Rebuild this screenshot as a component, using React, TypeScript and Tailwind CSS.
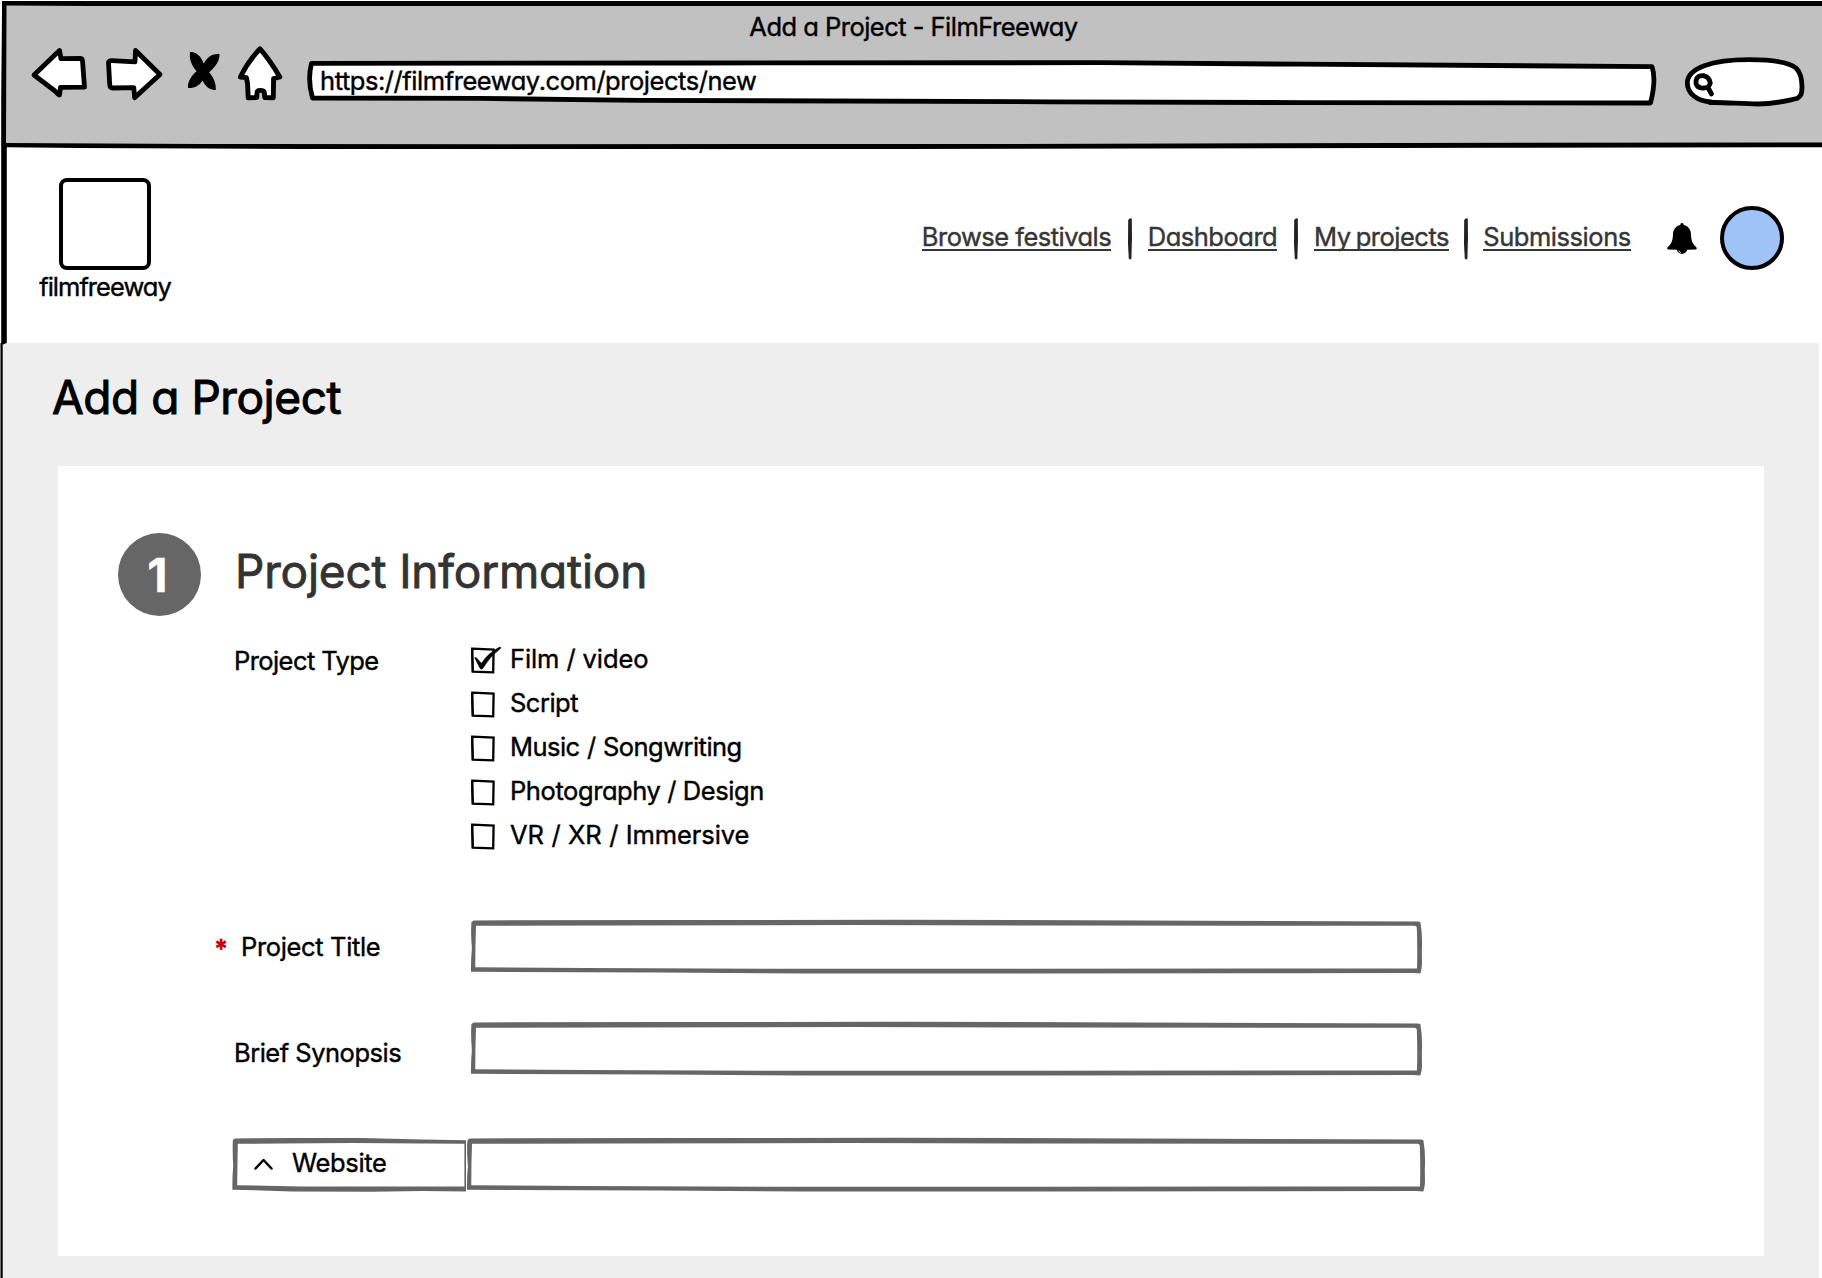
import type { ReactNode } from "react";

/* Hand-drawn rectangle outline that frames its children. */
function SketchBox({ w, children, className = "" }: { w: number; children?: ReactNode; className?: string }) {
  const outer = `M0.4 2.5 Q1 0.8 3 0.4 L${w * 0.2} 0 L${w * 0.45} -0.2 L${w * 0.7} 0.4 L${w - 3.5} 1.6 L${w - 1.6} 2.3 Q${w + 0.8} 16 ${w - 0.2} 31 L${w} 44 Q${w} 48 ${w - 1.6} 53.6 L${w - 9} 53 L${w * 0.6} 53.4 L${w * 0.35} 53.4 L${w * 0.2} 52.6 L0 51.7 Q-0.2 40 0.9 28 Q-0.4 14 0.4 2.5 Z`;
  const inner = `M5 5.8 Q4.2 28 4.3 47.2 L${w * 0.12} 48 L${w * 0.35} 48.8 L${w - 5} 48.5 Q${w - 4.4} 28 ${w - 5.2} 7.5 Q${w - 5.2} 5.8 ${w - 8} 5.7 L${w * 0.6} 5.6 L${w * 0.4} 5 L${w * 0.15} 5.6 Z`;
  return (
    <div className={"relative h-[54px] shrink-0 " + className}>
      <svg className="absolute inset-0 h-full w-full overflow-visible" viewBox={`0 0 ${w} 54`}>
        <path d={outer + inner} fill="#666" fillRule="evenodd" />
      </svg>
      {children}
    </div>
  );
}

function Checkbox({ checked }: { checked?: boolean }) {
  return (
    <svg className="mt-[2px] h-[30px] w-[39px] shrink-0 overflow-visible" viewBox="0 0 39 30" fill="none" stroke="#000">
      <path d="M1.3 3.7 L22.6 4.6 L22.2 27.3 L1.8 26.6 Z" strokeWidth="2.3" />
      <path d="M1 3.7 L1.2 15 L1.6 27" strokeWidth="1.8" />
      {checked && (
        <path
          d="M3.6 12.6 Q5.6 11.8 6.8 14.2 L10.4 18.2 Q17 8 28.6 2 Q30.5 1.8 29.6 3.6 Q19 11.5 12 23.2 Q10.4 25.6 8.6 22.8 Z"
          fill="#000"
          stroke="#000"
          strokeWidth="0.4"
        />
      )}
    </svg>
  );
}

const options = [
  { label: "Film / video", tracking: "tracking-[-0.1px]", checked: true },
  { label: "Script", tracking: "tracking-[-0.5px]" },
  { label: "Music / Songwriting", tracking: "tracking-[-0.55px] [word-spacing:0.8px]" },
  { label: "Photography / Design", tracking: "tracking-[-0.42px]" },
  { label: "VR / XR / Immersive", tracking: "tracking-[-0.1px] [word-spacing:0.5px]" },
];

const links = [
  { label: "Browse festivals", box: "w-[189px] tracking-[-0.52px]", gap: "ml-[17px] mr-[16px]" },
  { label: "Dashboard", box: "w-[129px] tracking-[-0.5px]", gap: "ml-[17px] mr-[16px]" },
  { label: "My projects", box: "w-[135px] tracking-[-0.5px] [word-spacing:-1.5px]", gap: "ml-[15px] mr-[15px]" },
  { label: "Submissions", box: "w-[148px] tracking-[-0.45px]", gap: "" },
];

function BrowserChrome() {
  return (
    <header className="relative h-[147px] shrink-0">
      <svg className="absolute inset-0 h-full w-full overflow-visible" viewBox="0 0 1822 147">
        <path d="M4 4 H1822 V145 H4 Z" fill="#c1c1c1" />
        <path d="M2 1 L1822 1 L1822 6 L90 6 L6.5 5.6 L6 143 L200 144 L500 144.2 L1000 144 L1400 143 L1822 142.4 L1822 147.3 L1500 147.8 L900 149 L300 149 L80 148 L6.8 147.3 L6.8 343 L1.2 345 L1.2 100 L2 10 Z" fill="#000" />
      </svg>
      <div className="relative flex h-[42px] justify-center pt-[12px] pl-[5px]">
        <span className="whitespace-pre tracking-[-0.52px]">Add a Project - FilmFreeway</span>
      </div>
      <div className="relative flex pl-[28px]">
        <svg className="h-[66px] w-[62px] shrink-0" viewBox="28 42 62 66" fill="#fff" stroke="#000" strokeWidth="4.8" strokeLinejoin="round">
          <path d="M34 75 L59.5 50.5 L61 58.7 L80.5 58.5 Q82.5 58.6 82.6 62 L84.5 87.2 L60.5 87.4 L59.5 95 Q58 94.5 55 91 Z" />
        </svg>
        <svg className="ml-[12px] h-[66px] w-[66px] shrink-0" viewBox="102 42 66 66" fill="#fff" stroke="#000" strokeWidth="4.8" strokeLinejoin="round">
          <path d="M108.5 62.5 Q109 60.5 112 60.6 L135 61.8 L135.5 50.5 L160 74.5 L134.6 97.6 L133.8 87.6 L112.5 88 Q109.8 88 109.7 84 Z" />
        </svg>
        <svg className="ml-[16px] h-[66px] w-[42px] shrink-0" viewBox="184 42 42 66" fill="#000">
          <path d="M190 52 C196 51.5 200.5 55.5 203.8 63.5 C207.5 56.5 212.5 53.6 219.4 54 C220 60 216 66.5 209.2 72.2 C213.5 77.5 216.2 83 215.8 90 C209.5 90.2 205.5 86.5 202.4 80.5 C199.5 85.5 194.5 88.4 188 88 C187.6 81.5 191 76 196.6 71.2 C191.5 65.5 189 59 190 52 Z" />
        </svg>
        <svg className="ml-[8px] h-[66px] w-[52px] shrink-0" viewBox="234 42 52 66" fill="#fff" stroke="#000" strokeWidth="4.9" strokeLinejoin="round">
          <path d="M260 48.8 Q270 60 279.8 77 L273.6 78.6 L273.3 97.8 L264.8 97.6 L264.3 92.5 Q264 90.4 260.3 90.4 Q257 90.4 257 93 L256.8 97.5 L248.2 97.8 L247.6 84 L246.4 77.6 L240.4 77 Q247.5 62 260 48.8 Z" />
        </svg>
        <div className="relative ml-[21px] h-[66px] w-[1350px] shrink-0">
          <svg className="absolute inset-0 h-full w-full" viewBox="307 42 1350 66">
            <path d="M311.5 63.3 L700 63 L1100 62.7 L1300 64.2 L1652 66.6 Q1656.5 80 1650.5 103 L1300 102.6 L1050 101.8 L640 100.3 L480 98.4 L312.5 98 Q307.2 80 311.5 63.3 Z" fill="#fff" stroke="#000" strokeWidth="4.8" strokeLinejoin="round" />
          </svg>
          <span className="relative block pt-[24px] pl-[13px] whitespace-pre tracking-[-0.45px]">https://filmfreeway.com/projects/new</span>
        </div>
        <svg className="ml-[23px] h-[66px] w-[132px] shrink-0" viewBox="1680 42 132 66" fill="none" stroke="#000" strokeWidth="4.8" strokeLinecap="round">
          <path fill="#fff" d="M1711 101.8 C1698 101.5 1687.3 94 1687.3 83 C1687.5 68 1712 59.7 1749 59.7 C1775 59.7 1790 63 1796 68 C1800 72 1802 80 1802 87 C1802 94 1801 96 1797 98.5 C1785 101 1775 104 1758 104 C1740 104 1725 102 1710 102.6" />
          <path d="M1697 78 Q1699 75.3 1703.5 75.6 Q1709.5 77 1710.3 83 Q1709 88 1704 88 Q1697.5 88.5 1696 83.5 Q1695.6 80.5 1697 78 Z M1708.5 88.5 L1711.5 94" strokeWidth="4.8" />
        </svg>
      </div>
    </header>
  );
}

function SiteHeader() {
  return (
    <div className="flex h-[196px] shrink-0 items-start">
      <div className="mt-[31px] ml-[38px] flex w-[134px] flex-col items-center">
        <div className="h-[92px] w-[92px] rounded-[8px] border-4 border-black" />
        <span className="mt-[2px] tracking-[-0.98px]">filmfreeway</span>
      </div>
      <nav className="mt-[71px] ml-[750px] flex h-[42px] text-[#363636]">
        {links.map((l) => (
          <div key={l.label} className="flex">
            <a className={"mt-[4px] flex h-[29px] justify-center border-b-2 border-[#363636] whitespace-pre " + l.box}>{l.label}</a>
            {l.gap && (
              <svg className={"h-[42px] w-[4px] " + l.gap} viewBox="0 0 4 42">
                <path d="M0.2 2 Q2 -0.4 3.8 0.6 L4 20 L3.4 40.5 Q2.2 42.5 0.8 40.5 L0 26 Z" fill="#222" />
              </svg>
            )}
          </div>
        ))}
      </nav>
      <svg className="mt-[75px] ml-[35px] h-[34px] w-[32px]" viewBox="1666 222 32 34">
        <path d="M1680.2 225 Q1680.2 223 1682 223 Q1683.8 223 1683.8 225 C1688.5 226.2 1690.8 230 1691 234 C1691.2 240 1692 243.5 1696.2 247 Q1697.6 248.6 1696 249.6 L1687.2 249.8 C1686 255.3 1678 255.3 1676.8 249.8 L1668 249.6 Q1666.4 248.6 1667.8 247 C1672 243.5 1672.8 240 1673 234 C1673.2 230 1675.5 226.2 1680.2 225 Z" fill="#000" />
        <path d="M1678.8 250.6 Q1679.2 252.2 1680.8 252.6" stroke="#fff" strokeWidth="0.9" fill="none" />
      </svg>
      <div className="mt-[59px] ml-[22px] h-[64px] w-[64px] rounded-full border-4 border-black bg-[#9ec3f7]" />
    </div>
  );
}

export default function App() {
  return (
    <div className="flex h-[1278px] w-[1822px] flex-col overflow-hidden bg-white font-['Inter',sans-serif] text-[25.5px] leading-[30px] text-black [-webkit-text-stroke:0.4px] [font-feature-settings:'cv11']">
      <BrowserChrome />
      <SiteHeader />
      <div className="flex min-h-0 flex-1">
        <div className="w-[2px] shrink-0 border-r border-black bg-[#777]" />
        <main className="w-[1817px] rounded-t-[3px] border-l border-[#444] bg-[#eee] pt-[24px] pl-[55px]">
          <h1 className="-ml-[6px] h-[99px] text-[46px] leading-[60px] tracking-[-0.45px] [-webkit-text-stroke:1px]">Add a Project</h1>
          <section className="h-[790px] w-[1706px] bg-white pt-[67px]">
            <div className="flex h-[110px] pl-[60px]">
              <div className="flex h-[83px] w-[83px] items-center justify-center rounded-full bg-[#666] pr-[4px] text-[47px] font-bold text-white">1</div>
              <h2 className="mt-[8px] ml-[34px] text-[46px] leading-[60px] tracking-[-0.2px] text-[#333] [-webkit-text-stroke:0.8px]">Project Information</h2>
            </div>
            <div className="flex h-[277px] pl-[176px]">
              <span className="mt-[3px] w-[237px] tracking-[-0.58px]">Project Type</span>
              <div>
                {options.map((o) => (
                  <div key={o.label} className="flex h-[44px]">
                    <Checkbox checked={o.checked} />
                    <span className={"mt-px whitespace-pre " + o.tracking}>{o.label}</span>
                  </div>
                ))}
              </div>
            </div>
            <div className="flex h-[102px] pl-[156px]">
              <span className="mt-[14px] w-[27px] font-bold text-[#c00]">*</span>
              <span className="mt-[12px] w-[230px] tracking-[-0.35px]">Project Title</span>
              <SketchBox w={951} className="w-[951px]" />
            </div>
            <div className="flex h-[116px] pl-[176px]">
              <span className="mt-[16px] w-[237px] tracking-[-0.5px]">Brief Synopsis</span>
              <SketchBox w={951} className="w-[951px]" />
            </div>
            <div className="flex pl-[174px]">
              <div className="relative h-[54px] w-[233px] shrink-0">
                <svg className="absolute inset-0 h-full w-full overflow-visible" viewBox="0 0 233 54">
                  <path d="M0.8 2.5 Q1.2 0.8 3 0.4 L60 0 L130 0.1 L190 1.4 L234 2.2 L234 53.6 L190 53 L140 53.7 L60 53.4 L0.4 51.7 Q0.2 40 1.2 28 Q0.4 14 0.8 2.5 Z M5.8 5.8 Q5.4 28 5.2 47.2 L70 48.6 L232.4 48.4 L232.4 5.8 L190 5.4 L120 5 L50 5.6 Z" fill="#666" fillRule="evenodd" />
                  <path d="M23.5 30.5 L31.5 22 L39.5 30.5" fill="none" stroke="#000" strokeWidth="2.5" strokeLinecap="round" strokeLinejoin="round" />
                </svg>
                <span className="relative block pt-[10px] pl-[60px] tracking-[-0.34px]">Website</span>
              </div>
              <SketchBox w={958} className="ml-[2px] w-[958px]" />
            </div>
          </section>
        </main>
      </div>
    </div>
  );
}
